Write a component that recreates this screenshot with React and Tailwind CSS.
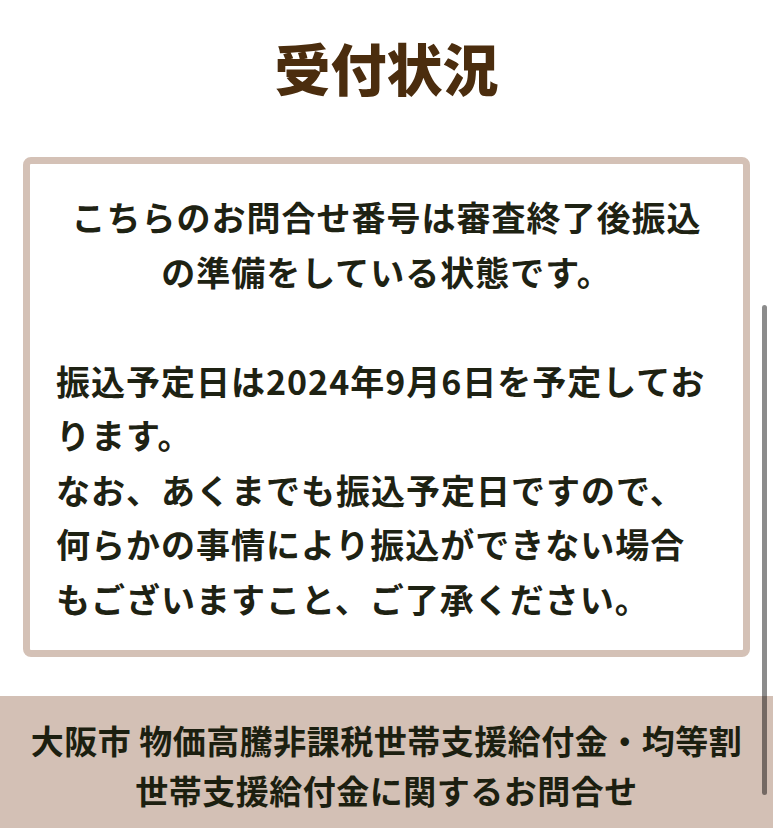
export default function App() {
    return (
        <div className="relative min-h-[835px] bg-white font-['Noto_Sans_CJK_JP','Noto_Sans',sans-serif] font-bold">
            <h1 className="pt-[33px] pb-[56px] text-center text-[56px] leading-[68px] font-black text-[#4b2d0e]">
                受付状況
            </h1>

            <div className="mx-[23px] rounded-[8px] border-[7px] border-[#d4c1b6] bg-white px-[26px] pt-[26px] pb-[24px] text-[34px] leading-[54.5px] tracking-[1px] text-[#1e2213]">
                <p className="text-center">
                    こちらのお問合せ番号は審査終了後振込
                    <br />
                    の準備をしている状態です。
                </p>
                <p className="mt-[54.5px]">
                    振込予定日は2024年9月6日を予定してお
                    <br />
                    ります。
                    <br />
                    なお、あくまでも振込予定日ですので、
                    <br />
                    何らかの事情により振込ができない場合
                    <br />
                    もございますこと、ご了承ください。
                </p>
            </div>

            <footer className="mt-[39px] bg-[#d3c0b5] pt-[19px] pb-[13px] text-center text-[33px] leading-[50px] tracking-[0.5px] text-[#1c1f10]">
                大阪市 物価高騰非課税世帯支援給付金・均等割
                <br />
                世帯支援給付金に関するお問合せ
            </footer>

            {/* overlay scrollbar */}
            <div className="absolute top-[305px] left-[762px] h-[490px] w-[5px] rounded-full bg-black/45"></div>
        </div>
    );
}
